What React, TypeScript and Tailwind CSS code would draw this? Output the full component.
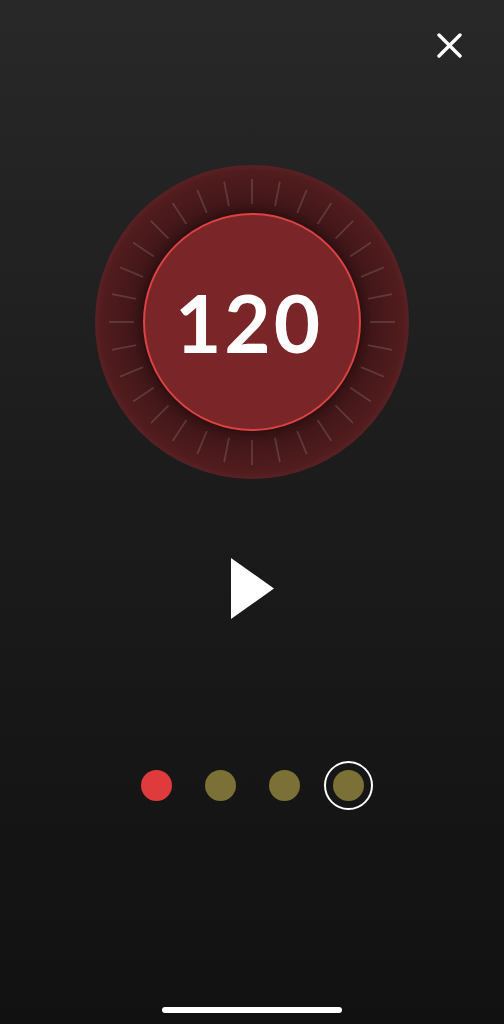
import React from "react";

const ticks = Array.from({ length: 32 }, (_, i) => (i * 360) / 32);

function CloseIcon() {
  return (
    <svg width="25" height="25" viewBox="0 0 25 25" fill="none">
      <path d="M2 2L23 23M23 2L2 23" stroke="white" strokeWidth="3.4" strokeLinecap="round" />
    </svg>
  );
}

function Dial({ value }: { value: number }) {
  return (
    <div className="relative flex h-[314px] w-[314px] items-center justify-center rounded-full bg-[radial-gradient(circle_closest-side,#341214_68%,#431719_78%,#511c1e_96%,#5a2123_100%)]">
      <svg className="absolute inset-0" width="314" height="314" viewBox="0 0 314 314">
        {ticks.map((a) => {
          const r = (a * Math.PI) / 180;
          const s = Math.sin(r);
          const c = Math.cos(r);
          return (
            <line
              key={a}
              x1={157 + 118 * s}
              y1={157 - 118 * c}
              x2={157 + 143 * s}
              y2={157 - 143 * c}
              stroke="rgba(255,255,255,0.14)"
              strokeWidth="1.8"
            />
          );
        })}
      </svg>
      <div className="relative flex h-[218px] w-[218px] items-center justify-center rounded-full border-2 border-[#dd4343] bg-[#7a2629] shadow-[0_0_10px_rgba(0,0,0,0.35)]">
        <span className="mr-[6px] font-['Lato',sans-serif] text-[80px] font-bold leading-none tracking-[3px] text-white">
          {value}
        </span>
      </div>
    </div>
  );
}

export default function App() {
  const dots = [
    { color: "bg-[#e03b3c]", active: false },
    { color: "bg-[#7b7035]", active: false },
    { color: "bg-[#7b7035]", active: false },
    { color: "bg-[#7b7035]", active: true },
  ];

  return (
    <main className="flex h-screen w-full flex-col items-center bg-linear-to-b from-[#282828] via-[#1b1b1b] to-[#111111]">
      <div className="flex w-full justify-end pr-[42px] pt-[33px]">
        <button className="flex items-center justify-center">
          <CloseIcon />
        </button>
      </div>

      <div className="mt-[107px]">
        <Dial value={120} />
      </div>

      <button className="mt-[79px] ml-[1px]">
        <svg width="43" height="61" viewBox="0 0 43 61">
          <polygon points="0,0 43,30.5 0,61" fill="white" />
        </svg>
      </button>

      <div className="mt-[142px] flex gap-[15px]">
        {dots.map((d, i) => (
          <div
            key={i}
            className={`flex h-[49px] w-[49px] items-center justify-center rounded-full ${
              d.active ? "border-2 border-white" : ""
            }`}
          >
            <div className={`h-[31px] w-[31px] rounded-full ${d.color}`} />
          </div>
        ))}
      </div>

      <div className="mb-[11px] mt-auto h-[6px] w-[180px] rounded-full bg-white" />
    </main>
  );
}
